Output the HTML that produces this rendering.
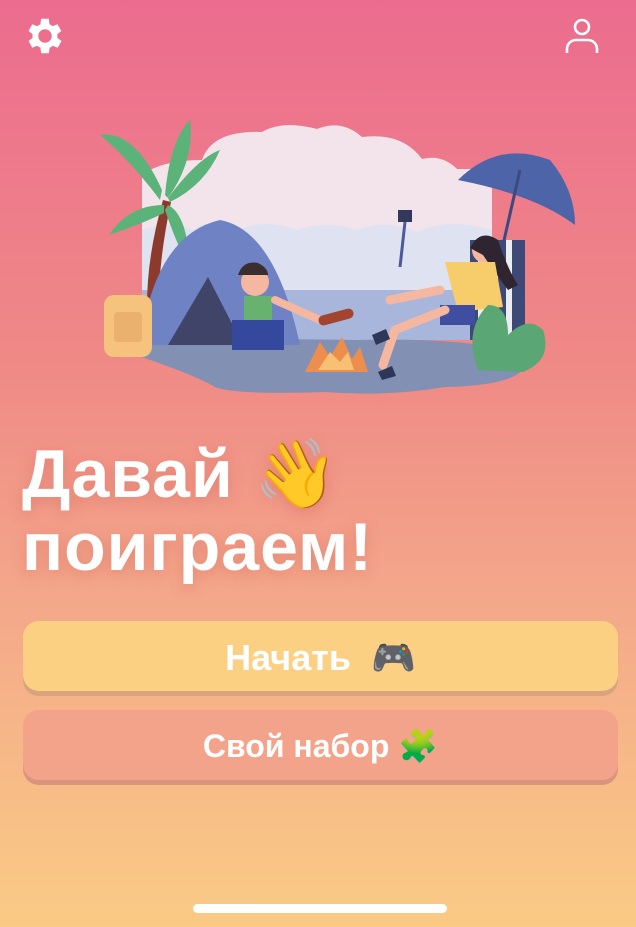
<!DOCTYPE html>
<html><head><meta charset="utf-8"><style>
html,body{margin:0;padding:0}
body{width:636px;height:927px;overflow:hidden;position:relative;background:linear-gradient(180deg,#ec6c8f 0%,#ef8a86 40%,#f4a88a 65%,#facb85 100%);font-family:"Liberation Sans","DejaVu Sans",sans-serif}
.title{position:absolute;left:22px;top:438px;color:#fff;font-weight:bold;font-size:68px;line-height:73px;text-shadow:0 4px 14px rgba(200,90,80,.35);letter-spacing:1px}
.btn{position:absolute;left:23px;width:595px;border-radius:16px;color:#fff;font-weight:bold;text-align:center}
.b1{top:621px;height:70px;background:#fbd083;box-shadow:0 5px 0 #d8a47e;font-size:36px;line-height:74px}
.b2{top:710px;height:70px;background:#f3a38a;box-shadow:0 5px 0 #d8957e;font-size:32px;line-height:72px}
.bar{position:absolute;left:193px;top:904px;width:254px;height:9px;border-radius:5px;background:#fff}
</style></head><body>
<svg style="position:absolute;left:22px;top:13px" width="46" height="46" viewBox="0 0 24 24"><path fill="#fff" d="M19.4 13a7.5 7.5 0 0 0 0-2l2.1-1.6-2-3.5-2.5 1a7 7 0 0 0-1.7-1L15 3h-4l-.4 2.9a7 7 0 0 0-1.7 1l-2.5-1-2 3.5L6.5 11a7.5 7.5 0 0 0 0 2l-2.1 1.6 2 3.5 2.5-1a7 7 0 0 0 1.7 1L11 21h4l.4-2.9a7 7 0 0 0 1.7-1l2.5 1 2-3.5zM13 15.5a3.5 3.5 0 1 1 0-7 3.5 3.5 0 0 1 0 7z" transform="translate(-1 0)"/></svg>
<svg style="position:absolute;left:562px;top:16px" width="40" height="40" viewBox="0 0 40 40" fill="none" stroke="#fff" stroke-width="2.6"><circle cx="20" cy="11" r="7"/><path d="M5 37v-4a9 9 0 0 1 9-9h12a9 9 0 0 1 9 9v4"/></svg>
<svg style="position:absolute;left:0;top:0" width="636" height="420" viewBox="0 0 636 420">
<path fill="#f2e4ea" d="M142 290V175q20-15 60-15 10-30 60-28 20-12 55-3 25-10 45 8 40-5 60 22 20-5 35 10h35v121z"/>
<path fill="#dfe2f1" d="M142 290v-60q30-10 50 0 25-15 45 0 30-12 60 0 30-10 60 0 30-12 60 2 30-15 75-2v60z"/>
<rect x="142" y="290" width="350" height="50" fill="#a8b6dc"/>
<path fill="#8290b4" d="M105 345q80-8 250-5 120-3 170 15 10 30-80 32-60 10-120 5-90 3-110-5-25-15-110-42z"/>
<path fill="#8c3a2c" d="M148 330q-5-60 15-130l8 2q-15 70-12 128z"/>
<g fill="#5cb37a"><path d="M160 200q-30-40-60-65 35-5 62 55z"/><path d="M165 195q5-55 25-75 5 40-22 78z"/><path d="M168 198q30-40 52-48-15 35-50 52z"/><path d="M164 205q-35 0-55 30 30-10 55-22z"/><path d="M168 205q20 10 22 65-15-30-25-60z"/></g>
<path fill="#6e82c4" d="M140 345q15-110 80-125 55 10 80 125z"/>
<path fill="#3f4468" d="M168 345l40-68 35 68z"/>
<rect x="104" y="295" width="48" height="62" rx="10" fill="#f5c37e"/>
<rect x="114" y="312" width="28" height="30" rx="4" fill="#eab06e"/>
<path fill="#33395a" d="M398 210h14v12h-14z"/><path stroke="#4a5a9c" stroke-width="3" d="M405 222l-5 45"/>
<path fill="#4e64a8" d="M458 180q40-40 92-20 25 30 25 65-40-30-117-45z"/>
<path stroke="#3d4a80" stroke-width="3" d="M520 170l-25 110"/>
<rect x="470" y="240" width="55" height="100" fill="#3d4a78"/>
<path fill="#fff" d="M478 240h6v100h-6zM492 240h6v100h-6zM506 240h6v100h-6z" opacity=".9"/>
<circle cx="255" cy="282" r="14" fill="#f5b7a0"/><path fill="#3a2e2e" d="M238 275q5-15 20-12 10 5 10 12z"/>
<path fill="#67b26f" d="M244 296h28v50h-28z"/>
<path fill="#34489e" d="M232 320h52v30h-52z"/>
<path stroke="#f5b7a0" stroke-width="8" stroke-linecap="round" d="M275 300l45 20"/>
<rect x="318" y="312" width="36" height="10" rx="5" fill="#a2442e" transform="rotate(-15 336 317)"/>
<path fill="#ed8e4c" d="M305 372l15-30 10 15 12-20 10 22 8-12 8 25z"/>
<path fill="#f7c073" d="M318 370l12-18 10 10 8-10 6 18z"/>
<circle cx="485" cy="250" r="13" fill="#f5b7a0"/><path fill="#2e2530" d="M470 248q10-20 28-8 10 30 20 45l-10 5q-15-20-25-35z"/>
<path fill="#f7cc6a" d="M445 262l50 0 8 45-45 5z"/>
<path fill="#3f4ea0" d="M440 305h35v20h-35z"/>
<path fill="none" stroke="#f5b7a0" stroke-width="9" stroke-linecap="round" d="M445 310l-50 20-12 35M440 290l-50 10"/>
<path fill="#2f3758" d="M372 335l14-6 4 10-14 6zM378 372l14-6 4 10-14 4z"/>
<path fill="#5aa674" d="M478 370q-15-40 10-65 20 0 20 30 20-20 35-5 10 30-20 42z"/>
</svg>
<div class="title">Давай 👋<br>поиграем!</div>
<div class="btn b1">Начать&nbsp; 🎮</div>
<div class="btn b2">Свой набор 🧩</div>
<div class="bar"></div>
</body></html>
